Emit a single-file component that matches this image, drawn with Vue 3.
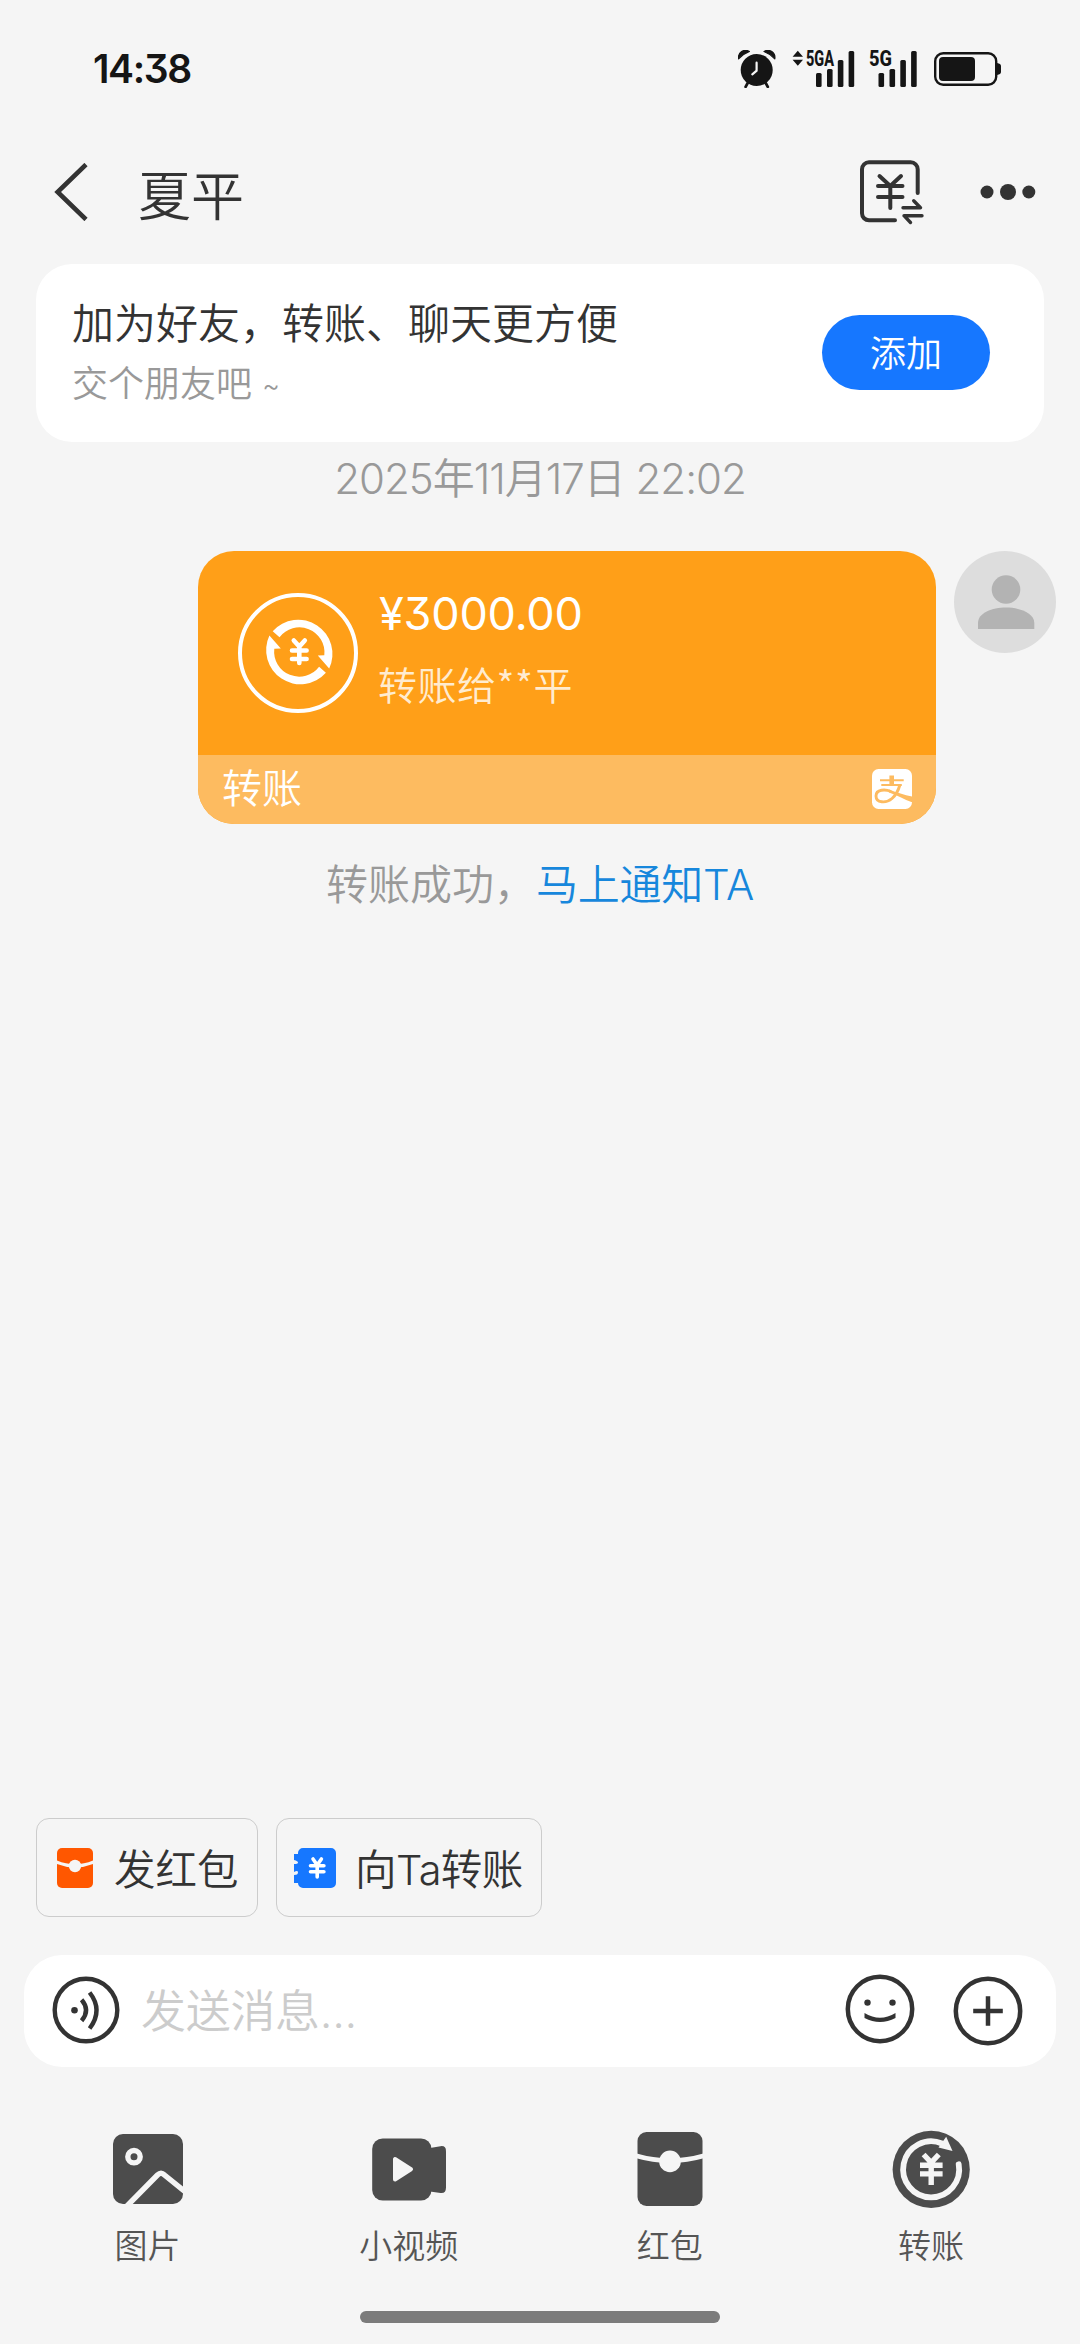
<script setup>
const bars = [
  { x: 0, y: 22 },
  { x: 11, y: 18 },
  { x: 21.8, y: 9 },
  { x: 32.6, y: 0 },
]

const tools = [
  { id: 'picture', label: '图片' },
  { id: 'video', label: '小视频' },
  { id: 'packet', label: '红包' },
  { id: 'transfer', label: '转账' },
]
</script>

<template>
  <div class="page">
    <div class="status">
      <span class="clock">14:38</span>
      <div class="status-icons">
        <svg class="alarm" width="38" height="38" viewBox="0 0 38 38">
          <circle cx="18.7" cy="20" r="16" fill="#151515" />
          <path d="M.6 8.800C-.4 2.600 6-1.800 11.400 1.500Q5 4 .6 8.800ZM36.800 8.800C37.800 2.600 31.400-1.800 26 1.500Q32.400 4 36.800 8.800Z" fill="#151515" stroke="#151515" stroke-width="1.200" stroke-linejoin="round" />
          <path d="M10.500 31.500 7.600 36.800M26.900 31.500l2.900 5.300" stroke="#151515" stroke-width="2.800" stroke-linecap="round" />
          <path d="M18.600 12.700v8l-4.300 3.600" fill="none" stroke="#f5f5f5" stroke-width="2.200" stroke-linecap="round" />
        </svg>
        <svg class="signal-a" width="64" height="54" viewBox="0 -8 64 54">
          <path d="M.6 6.800 5.800.8 11 6.800ZM.6 9.800 5.800 15.800 11 9.800Z" fill="#151515" />
          <text x="14" y="16.300" class="net" textLength="28" lengthAdjust="spacingAndGlyphs">5GA</text>
          <rect v-for="b in bars" :key="b.x" :x="b.x + 24" :y="b.y + 1" width="5.600" :height="36 - b.y" rx="1.500" fill="#151515" />
        </svg>
        <svg class="signal-b" width="50" height="54" viewBox="0 -8 50 54">
          <text x="0" y="16.300" class="net" textLength="23" lengthAdjust="spacingAndGlyphs">5G</text>
          <rect v-for="b in bars" :key="b.x" :x="b.x + 9.500" :y="b.y + 1" width="5.600" :height="36 - b.y" rx="1.500" fill="#151515" />
        </svg>
        <svg width="68" height="34" viewBox="0 0 68 34">
          <rect x="1.200" y="1.200" width="61" height="31.600" rx="8" fill="none" stroke="#151515" stroke-width="2.400" />
          <rect x="5" y="5" width="36" height="24" rx="4" fill="#151515" />
          <path d="M63 11q4 .6 4 3v6q0 2.400-4 3Z" fill="#151515" />
        </svg>
      </div>
    </div>

    <header class="header">
      <svg class="back" width="34" height="58" viewBox="0 0 34 58">
        <path d="M32 1.500 3.600 29l28.400 27.500" fill="none" stroke="#333" stroke-width="4.600" />
      </svg>
      <h1>夏平</h1>
      <svg class="yen-box" width="66" height="68" viewBox="0 0 66 68" fill="none" stroke="#333" stroke-width="4" stroke-linecap="round">
        <path d="M58.700 35V11.300a7 7 0 0 0-7-7H10a7 7 0 0 0-7 7v44a7 7 0 0 0 7 7h26" />
        <path d="M20.500 18 31.300 28 42 18M19 28h24.500M19 39h24.500M31.300 28v22" />
        <path d="M54.700 42.800 61.500 49.700H44M63 57.700H45l6.500 6.800" stroke-width="3.400" stroke-linejoin="round" />
      </svg>
      <svg width="56" height="18" viewBox="0 0 56 18" fill="#333">
        <circle cx="7" cy="9" r="6.500" />
        <circle cx="28" cy="9" r="8" />
        <circle cx="48.800" cy="9" r="6.500" />
      </svg>
    </header>

    <section class="friend">
      <div class="friend-text">
        <div class="friend-title">加为好友，转账、聊天更方便</div>
        <div class="friend-sub">交个朋友吧 <span class="tilde">~</span></div>
      </div>
      <button class="add">添加</button>
    </section>

    <div class="date">2025年11月17日 22:02</div>

    <div class="message">
      <div class="bubble">
        <div class="bubble-main">
          <svg width="120" height="120" viewBox="0 0 120 120">
            <circle cx="60" cy="60" r="58" fill="none" stroke="#fff" stroke-width="4" />
            <g fill="#fff">
              <path d="M34.700 38.200A34.200 34.200 0 0 1 91.200 75.500L79.800 62.600 86.300 62.200A25 25 0 0 0 41.500 44.300Z" />
              <path d="M34.700 38.200A34.200 34.200 0 0 1 91.200 75.500L79.800 62.600 86.300 62.200A25 25 0 0 0 41.500 44.300Z" transform="rotate(180 61.300 59)" />
            </g>
            <path d="M55.800 47.500l5.500 6 5.500-6M54 57.500h14.600M54 66h14.600M61.300 54v16" fill="none" stroke="#fff" stroke-width="4.600" stroke-linecap="round" />
          </svg>
          <div class="bubble-text">
            <div class="amount">¥3000.00</div>
            <div class="payee">转账给**平</div>
          </div>
        </div>
        <div class="bubble-foot">
          <span>转账</span>
          <svg width="40" height="40" viewBox="0 0 40 40">
            <rect width="40" height="40" rx="6.500" fill="#fff" />
            <g fill="none" stroke="#fdbb60">
              <path d="M19.700 6.500V16" stroke-width="4.600" />
              <path d="M8 11.200h23.700" stroke-width="2" />
              <path d="M9.300 16h20.500" stroke-width="1.800" />
              <path d="M28 15.500C26.500 21 24 26 20 29.500 14 34.600 4 34 4 27c0-7 9.500-6.800 15-4.500" stroke-width="2.900" />
            </g>
            <path d="M17 20.500C25 23.500 32 26 40 27.500v5.700C32 30.500 25 26 17 23.500Z" fill="#fdbb60" />
          </svg>
        </div>
      </div>
      <svg width="102" height="102" viewBox="0 0 102 102">
        <circle cx="51" cy="51" r="51" fill="#ddd" />
        <circle cx="52" cy="38.500" r="14.300" fill="#b3b3b3" />
        <path d="M24 78v-6C24 62 38 56.500 52 56.500S80.300 62 80.300 72v6Z" fill="#b3b3b3" />
      </svg>
    </div>

    <div class="notice">转账成功，<a>马上通知TA</a></div>

    <div class="chips">
      <div class="chip">
        <svg width="36" height="40" viewBox="0 0 36 40">
          <rect width="36" height="40" rx="5" fill="#ff5700" />
          <path d="M-1 13.800Q18 22 37 13.800" fill="none" stroke="#f5f5f5" stroke-width="3.200" />
          <circle cx="18" cy="18" r="6.200" fill="#f5f5f5" />
        </svg>
        <span>发红包</span>
      </div>
      <div class="chip chip-transfer">
        <svg width="42" height="40" viewBox="0 0 42 40">
          <path d="M9 0h28a5 5 0 0 1 5 5v30a5 5 0 0 1-5 5H9a5 5 0 0 1-5-5H0v-8q4 0 4-2.500T0 24V16q4 0 4-1.500T0 12V6h4V5a5 5 0 0 1 5-5Z" fill="#1677ff" />
          <path d="M19 11l4.200 6 4.200-6M16.500 17.800h13.400M16.500 23.800h13.400M23.200 17v12" fill="none" stroke="#fff" stroke-width="3.600" stroke-linecap="round" />
        </svg>
        <span>向Ta转账</span>
      </div>
    </div>

    <div class="composer">
      <svg class="voice" width="68" height="68" viewBox="0 0 68 68" fill="none" stroke="#333" stroke-width="4.400">
        <circle cx="34" cy="34" r="31.300" />
        <circle cx="22.500" cy="34.300" r="3.300" fill="#333" stroke="none" />
        <path d="M29.600 23.800Q38.600 34.300 29.600 44.800M37.600 16.500Q51.500 34.300 37.600 52.500" />
      </svg>
      <span class="placeholder">发送消息...</span>
      <svg class="smile" width="70" height="70" viewBox="0 0 70 70">
        <circle cx="35" cy="35" r="32.200" fill="none" stroke="#333" stroke-width="4.500" />
        <circle cx="22.500" cy="28.600" r="3.200" fill="#333" />
        <circle cx="47.500" cy="28.600" r="3.200" fill="#333" />
        <path d="M19.500 39Q35 48.500 50.500 39v5Q35 52 19.500 44Z" fill="#333" />
      </svg>
      <svg class="plus" width="70" height="70" viewBox="0 0 70 70" fill="none" stroke="#333" stroke-width="4.500">
        <circle cx="35" cy="35" r="32.200" />
        <path d="M20.200 35h29.600M35 20.200v29.600" />
      </svg>
    </div>

    <nav class="tools">
      <div v-for="t in tools" :key="t.id" class="tool">
        <svg width="78" height="78" viewBox="0 0 78 78">
          <template v-if="t.id === 'picture'">
            <rect x="4" y="4" width="70" height="70" rx="10" fill="#4c4c4c" />
            <circle cx="25" cy="26.700" r="6.200" fill="none" stroke="#f5f5f5" stroke-width="5.400" />
            <path d="M17 77 48.500 45Q52 41.500 55.500 45L77 62.500" fill="none" stroke="#f5f5f5" stroke-width="5.400" />
          </template>
          <template v-else-if="t.id === 'video'">
            <rect x="2.200" y="8.500" width="59.300" height="62" rx="10.500" fill="#4c4c4c" />
            <path d="M60 18l10.500-1.800q5.500-.7 5.500 5v36q0 6.500-5.500 5.800L60 61.500Z" fill="#4c4c4c" />
            <path d="M25 29v20.500l16-10.300Z" fill="#f5f5f5" stroke="#f5f5f5" stroke-width="4" stroke-linejoin="round" />
          </template>
          <template v-else-if="t.id === 'packet'">
            <rect x="6.500" y="2" width="65" height="74" rx="9" fill="#4c4c4c" />
            <path d="M5 25.800Q39 35.500 73 25.800" fill="none" stroke="#f5f5f5" stroke-width="4.600" />
            <circle cx="39" cy="31.400" r="10.800" fill="#f5f5f5" />
          </template>
          <template v-else>
            <circle cx="39.200" cy="39.400" r="38.600" fill="#4c4c4c" />
            <path d="M66.700 34.300A28 28 0 1 1 50 13.500" fill="none" stroke="#f5f5f5" stroke-width="5.800" stroke-linecap="round" />
            <path d="M54.200 6.700 60.500 21 46.500 17.500Z" fill="#f5f5f5" />
            <path d="M31.600 24.500l7.600 8 7.600-8M28 35.300h22.600M28 43.900h22.600M39.200 32v23" fill="none" stroke="#f5f5f5" stroke-width="5.400" />
          </template>
        </svg>
        <span>{{ t.label }}</span>
      </div>
    </nav>

    <div class="home-bar"></div>
  </div>
</template>

<style>
body {
  background: #f5f5f5;
}
</style>

<style scoped>
.page {
  display: flex;
  flex-direction: column;
  box-sizing: border-box;
  width: 1080px;
  height: 2344px;
  padding-bottom: 21px;
  overflow: hidden;
  background: #f5f5f5;
  color: #333;
  font-family: Inter, "Noto Sans CJK SC", sans-serif;
  font-weight: 350;
  font-feature-settings: "cv09";
  white-space: nowrap;
}
svg {
  display: block;
  flex: none;
}
.status {
  display: flex;
  align-items: center;
  justify-content: space-between;
  height: 138px;
  padding: 0 78px 0 93px;
}
.clock {
  color: #151515;
  font-size: 39px;
  font-weight: 600;
  line-height: 48px;
  letter-spacing: -1.4px;
}
.status-icons {
  display: flex;
  align-items: center;
}
.signal-a {
  margin-left: 16px;
}
.signal-b {
  margin: 0 15px 0 13px;
}
.net {
  fill: #151515;
  font-family: Roboto, sans-serif;
  font-size: 22.500px;
  font-weight: 800;
}
.header {
  display: flex;
  align-items: center;
  height: 108px;
  padding: 0 44px 0 54px;
}
h1 {
  flex: 1;
  margin: 9px 0 0 50px;
  font-size: 53px;
  font-weight: 350;
  line-height: 64px;
}
.yen-box {
  margin-right: 55px;
}
.friend {
  display: flex;
  align-items: center;
  justify-content: space-between;
  box-sizing: border-box;
  height: 178px;
  margin: 18px 36px 0;
  padding: 0 54px 0 36px;
  border-radius: 36px;
  background: #fff;
}
.friend-text {
  margin-top: 4px;
}
.friend-title {
  font-size: 42px;
  line-height: 62px;
}
.friend-sub {
  color: #999;
  font-size: 36px;
  line-height: 58px;
}
.tilde {
  position: relative;
  top: -2px;
  font-size: 27px;
}
.add {
  width: 168px;
  height: 75px;
  margin-bottom: 1px;
  padding: 4px 0 0;
  border: 0;
  border-radius: 38px;
  background: #1677ff;
  color: #fff;
  font: inherit;
  font-size: 36px;
  line-height: 71px;
}
.date {
  margin-top: 6px;
  color: #999;
  font-size: 42px;
  line-height: 61px;
  letter-spacing: -1px;
  text-align: center;
}
.message {
  display: flex;
  gap: 18px;
  height: 273px;
  margin: 42px 24px 0 198px;
}
.bubble {
  width: 738px;
  border-radius: 36px;
  overflow: hidden;
  background: #ff9f18;
  color: #fff;
}
.bubble-main {
  display: flex;
  gap: 20px;
  height: 204px;
  padding: 0 40px;
  box-sizing: border-box;
  align-items: center;
}
.bubble-text {
  margin-top: -10px;
}
.amount {
  padding-left: 1px;
  font-size: 45px;
  font-weight: 400;
  line-height: 70px;
  letter-spacing: -0.2px;
}
.payee {
  color: #ffecd0;
  font-family: "Noto Sans CJK SC", sans-serif;
  font-size: 39px;
  line-height: 68px;
  letter-spacing: 0.5px;
}
.bubble-foot {
  display: flex;
  align-items: center;
  justify-content: space-between;
  height: 67px;
  padding: 0 24px 2px;
  background: #fdbb60;
  font-size: 40px;
  line-height: 66px;
}
.notice {
  margin-top: 31px;
  color: #999;
  font-size: 42px;
  line-height: 60px;
  text-align: center;
}
.notice a {
  color: #1787dc;
  letter-spacing: -0.2px;
}
.chips {
  display: flex;
  gap: 18px;
  margin: auto 36px 38px;
}
.chip {
  display: flex;
  gap: 21px;
  align-items: center;
  box-sizing: border-box;
  width: 222px;
  height: 99px;
  padding-left: 20px;
  border: 1px solid #ccc;
  border-radius: 13px;
  font-size: 41.500px;
  line-height: 60px;
}
.chip span {
  margin-top: 5px;
}
.chip-transfer {
  gap: 19px;
  width: 266px;
  padding-left: 17px;
  letter-spacing: -0.6px;
}
.composer {
  display: flex;
  align-items: center;
  box-sizing: border-box;
  height: 112px;
  margin: 0 24px;
  padding: 0 33px 0 27.500px;
  border-radius: 38px;
  background: #fff;
}
.voice {
  margin-top: -3px;
}
.placeholder {
  flex: 1;
  margin: 1px 0 0 21.500px;
  color: #ccc;
  font-size: 45px;
  line-height: 60px;
  letter-spacing: -0.3px;
}
.smile {
  margin: -5px 38px 0 0;
}
.plus {
  margin-top: -1px;
}
.tools {
  display: flex;
  height: 244px;
  padding: 0 18.500px 0 17px;
}
.tool {
  display: flex;
  flex: 1;
  flex-direction: column;
  align-items: center;
  gap: 17px;
  padding-top: 63px;
  color: #555;
  font-size: 33px;
  line-height: 42px;
}
.home-bar {
  width: 360px;
  height: 12px;
  margin: 0 auto;
  border-radius: 6px;
  background: #7b7b7b;
}
</style>
